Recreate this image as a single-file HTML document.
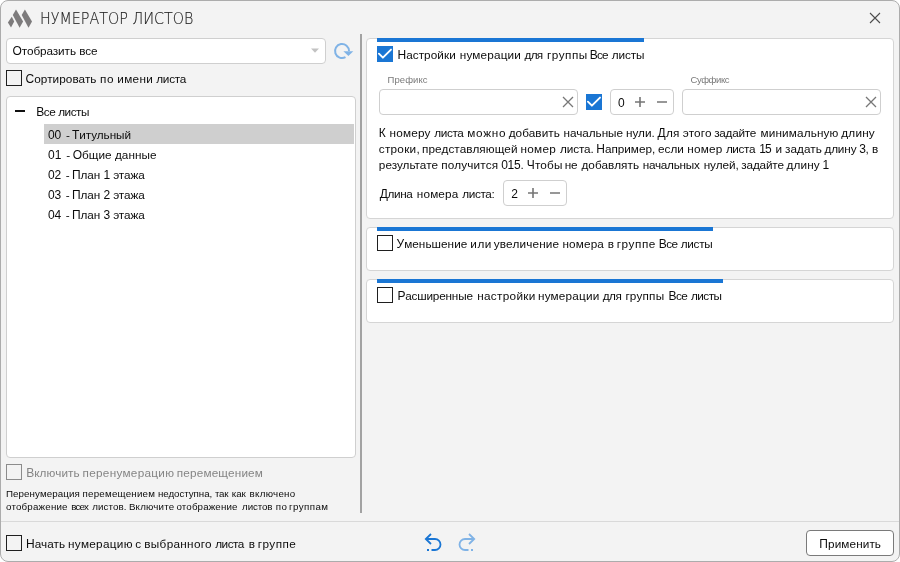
<!DOCTYPE html>
<html lang="ru">
<head>
<meta charset="utf-8">
<title>Нумератор листов</title>
<style>
html,body{margin:0;padding:0;background:#fff;}
body{width:900px;height:562px;position:relative;overflow:hidden;font-family:"Liberation Sans",sans-serif;}
.win{position:absolute;left:0;top:0;width:900px;height:562px;box-sizing:border-box;background:#f3f3f3;border:1px solid #acacac;border-radius:8px;}
.abs{position:absolute;box-sizing:border-box;}
.t{position:absolute;white-space:nowrap;line-height:16px;height:16px;}
.t .c{font-size:12px;}
.t .w{position:relative;}
.box{position:absolute;box-sizing:border-box;background:#fff;border:1px solid #cfcfcf;border-radius:4px;}
.panel{position:absolute;box-sizing:border-box;background:#fff;border:1px solid #d5d5d5;border-radius:4px;}
.bar{position:absolute;height:4px;background:#1a76d4;}
.cb{position:absolute;box-sizing:border-box;width:16px;height:16px;border:1px solid #1f1f1f;background:transparent;}
.cb.dis{border-color:#8c8c8c;}
.cb.on{border:none;background:#1a76d4;}
svg{position:absolute;overflow:visible;}
</style>
</head>
<body>
<div id="root" style="position:absolute;left:0;top:0;width:900px;height:562px;will-change:transform;">
<div class="win"></div>

<!-- logo -->
<svg style="left:0;top:0" width="40" height="36" viewBox="0 0 40 36">
  <g fill="#7d7b7c">
    <polygon points="7.9,22.4 11.8,16.7 14.2,21.4 11.0,27.5"/>
    <polygon points="12.8,15.0 16.0,9.6 23.1,21.4 19.6,27.8"/>
    <polygon points="21.7,15.0 24.9,9.6 32.0,21.4 28.5,27.8"/>
  </g>
</svg>

<!-- close -->
<svg style="left:865px;top:8px" width="20" height="20" viewBox="0 0 20 20">
  <path d="M5 5 L15 15 M15 5 L5 15" stroke="#4c4c4c" stroke-width="1.1" fill="none"/>
</svg>

<!-- combo -->
<div class="box" style="left:6px;top:38px;width:320px;height:26px;"></div>
<svg style="left:311px;top:48px" width="8" height="5" viewBox="0 0 8 5"><polygon points="0,0.5 8,0.5 4,4.8" fill="#c2c2c2"/></svg>

<!-- refresh icon -->
<svg style="left:332px;top:42px" width="22" height="18" viewBox="0 0 22 18">
  <path d="M17 9.1 A7 7 0 1 0 13.5 15.06" stroke="#80b3e6" stroke-width="2" fill="none"/>
  <polygon points="11.4,9.2 21.3,9.2 16.4,13.9" fill="#80b3e6"/>
</svg>

<!-- sort checkbox -->
<div class="cb" style="left:6px;top:70px;"></div>

<!-- tree -->
<div class="box" style="left:6px;top:96px;width:350px;height:362px;"></div>
<div class="abs" style="left:15px;top:110px;width:10px;height:2px;background:#111;"></div>
<div class="abs" style="left:44px;top:124px;width:310px;height:20px;background:#cfcfcf;"></div>

<!-- disabled checkbox -->
<div class="cb dis" style="left:6px;top:464px;"></div>

<!-- vertical separator -->
<div class="abs" style="left:360px;top:34px;width:2px;height:479px;background:#a2a2a2;"></div>

<!-- bottom line -->
<div class="abs" style="left:1px;top:521px;width:898px;height:1px;background:#d9d9d9;"></div>
<div class="cb" style="left:6px;top:535px;"></div>

<!-- undo / redo -->
<svg style="left:420px;top:528px" width="60" height="28" viewBox="0 0 60 28">
  <g fill="none" stroke="#1a76d4" stroke-width="1.8">
    <path d="M11 6 L5.8 11 L11 16"/>
    <path d="M6 11 H15 A5.5 5.5 0 0 1 15 22 H11.5"/>
    <path d="M7 22 H9"/>
  </g>
  <g fill="none" stroke="#80b3e6" stroke-width="1.8">
    <path d="M49 6 L54.2 11 L49 16"/>
    <path d="M54 11 H45 A5.5 5.5 0 0 0 45 22 H48.5"/>
    <path d="M51 22 H53"/>
  </g>
</svg>

<!-- apply -->
<div class="abs" style="left:806px;top:530px;width:88px;height:26px;background:#fff;border:1px solid #7a7a7a;border-radius:4px;"></div>

<!-- panel 1 -->
<div class="panel" style="left:366px;top:38px;width:528px;height:181px;"></div>
<div class="bar" style="left:377px;top:38px;width:267px;"></div>
<div class="cb on" style="left:377px;top:46px;"></div>
<svg style="left:377px;top:46px" width="16" height="16" viewBox="0 0 16 16"><path d="M1.9 7.7 L5.9 11.7 L14 3.6" stroke="#fff" stroke-width="1.9" stroke-linecap="round" stroke-linejoin="round" fill="none"/></svg>

<div class="box" style="left:379px;top:89px;width:199px;height:26px;"></div>
<svg style="left:562px;top:96px" width="12" height="12" viewBox="0 0 12 12"><path d="M1 1 L11 11 M11 1 L1 11" stroke="#777" stroke-width="1.3" fill="none"/></svg>

<div class="cb on" style="left:586px;top:94px;"></div>
<svg style="left:586px;top:94px" width="16" height="16" viewBox="0 0 16 16"><path d="M1.9 7.7 L5.9 11.7 L14 3.6" stroke="#fff" stroke-width="1.9" stroke-linecap="round" stroke-linejoin="round" fill="none"/></svg>

<div class="box" style="left:610px;top:89px;width:64px;height:26px;"></div>
<svg style="left:635px;top:96px" width="36" height="12" viewBox="0 0 36 12"><path d="M0 6 H10 M5 1 V11 M22 6 H32" stroke="#757575" stroke-width="1.6" fill="none"/></svg>

<div class="box" style="left:682px;top:89px;width:199px;height:26px;"></div>
<svg style="left:865px;top:96px" width="12" height="12" viewBox="0 0 12 12"><path d="M1 1 L11 11 M11 1 L1 11" stroke="#777" stroke-width="1.3" fill="none"/></svg>

<div class="box" style="left:503px;top:180px;width:64px;height:26px;"></div>
<svg style="left:528px;top:187px" width="36" height="12" viewBox="0 0 36 12"><path d="M0 6 H10 M5 1 V11 M22 6 H32" stroke="#757575" stroke-width="1.6" fill="none"/></svg>

<!-- panel 2 -->
<div class="panel" style="left:366px;top:227px;width:528px;height:44px;"></div>
<div class="bar" style="left:377px;top:227px;width:336px;"></div>
<div class="cb" style="left:377px;top:235px;"></div>

<!-- panel 3 -->
<div class="panel" style="left:366px;top:279px;width:528px;height:44px;"></div>
<div class="bar" style="left:377px;top:279px;width:346px;"></div>
<div class="cb" style="left:377px;top:287px;"></div>

<div class="t" id="title" style="left:39.75px;top:10.81px;font-size:15px;color:#222;transform-origin:0 13.19px;-webkit-text-stroke:0.15px #222;font-family:'DejaVu Sans Light','DejaVu Sans','Liberation Sans',sans-serif;font-weight:200;transform:scale(0.9531,1);">НУМЕРАТОР ЛИСТОВ</div>
<div class="t" id="combo" style="left:12.50px;top:42.93px;font-size:11.75px;color:#0c0c0c;letter-spacing:-0.081px;"><span class="c">О</span>тобразить все</div>
<div class="t" id="sort" style="left:26.25px;top:70.93px;font-size:11.75px;color:#0c0c0c;"><span class="w" style="left:-0.70px;letter-spacing:0.050px;"><span class="c">С</span>ортировать</span> <span class="w" style="left:-0.50px;letter-spacing:0.800px;">по</span> <span class="w" style="left:-1.00px;letter-spacing:0.350px;">имени</span> <span class="w" style="left:-1.20px;letter-spacing:-0.275px;">листа</span></div>
<div class="t" id="t0" style="left:36.25px;top:104.43px;font-size:11.75px;color:#0c0c0c;letter-spacing:-0.445px;"><span class="c">В</span>се листы</div>
<div class="t" id="t1" style="left:48.00px;top:127.43px;font-size:11.75px;color:#0c0c0c;letter-spacing:-0.064px;"><span class="c">00</span> <span class="w" style="left:1.6px">-</span> <span class="w" style="left:0.5px"><span class="c">Т</span>итульный</span></div>
<div class="t" id="t2" style="left:48.00px;top:147.43px;font-size:11.75px;color:#0c0c0c;letter-spacing:0.029px;"><span class="c">01</span> <span class="w" style="left:1.6px">-</span> <span class="w" style="left:0.7px"><span class="c">О</span>бщие</span> <span class="w" style="left:0.7px">данные</span></div>
<div class="t" id="t3" style="left:48.00px;top:167.43px;font-size:11.75px;color:#0c0c0c;letter-spacing:-0.061px;"><span class="c">02</span> <span class="w" style="left:1.4px">-</span> <span class="w" style="left:0.4px"><span class="c">П</span>лан</span> <span class="w" style="left:0.4px"><span class="c">1</span></span> <span class="w" style="left:0.3px">этажа</span></div>
<div class="t" id="t4" style="left:48.00px;top:187.43px;font-size:11.75px;color:#0c0c0c;letter-spacing:-0.061px;"><span class="c">03</span> <span class="w" style="left:1.4px">-</span> <span class="w" style="left:0.4px"><span class="c">П</span>лан</span> <span class="w" style="left:0.4px"><span class="c">2</span></span> <span class="w" style="left:0.3px">этажа</span></div>
<div class="t" id="t5" style="left:48.00px;top:207.43px;font-size:11.75px;color:#0c0c0c;letter-spacing:-0.061px;"><span class="c">04</span> <span class="w" style="left:1.4px">-</span> <span class="w" style="left:0.4px"><span class="c">П</span>лан</span> <span class="w" style="left:0.4px"><span class="c">3</span></span> <span class="w" style="left:0.3px">этажа</span></div>
<div class="t" id="en" style="left:26.75px;top:464.93px;font-size:11.75px;color:#858585;"><span class="w" style="left:-0.60px;letter-spacing:0.086px;"><span class="c">В</span>ключить</span> <span class="w" style="left:-1.00px;letter-spacing:0.283px;">перенумерацию</span> <span class="w" style="left:-1.70px;letter-spacing:0.155px;">перемещением</span></div>
<div class="t" id="s1" style="left:6.50px;top:485.62px;font-size:9.75px;color:#0c0c0c;"><span class="w" style="left:-0.50px;letter-spacing:0.083px;">Перенумерация</span> <span class="w" style="left:-0.50px;letter-spacing:0.227px;">перемещением</span> <span class="w" style="left:-0.50px;letter-spacing:-0.050px;">недоступна,</span> <span class="w" style="left:-0.50px;letter-spacing:-0.250px;">так</span> <span class="w" style="left:0.30px;letter-spacing:-0.100px;">как</span> <span class="w" style="left:1.50px;letter-spacing:0.286px;">включено</span></div>
<div class="t" id="s2" style="left:6.50px;top:498.62px;font-size:9.75px;color:#0c0c0c;"><span class="w" style="left:-0.50px;letter-spacing:0.190px;">отображение</span> <span class="w" style="left:0.20px;letter-spacing:-0.733px;">всех</span> <span class="w" style="left:1.50px;letter-spacing:0.083px;">листов.</span> <span class="w" style="left:1.20px;letter-spacing:0.171px;">Включите</span> <span class="w" style="left:0.70px;letter-spacing:0.130px;">отображение</span> <span class="w" style="left:2.50px;letter-spacing:-0.100px;">листов</span> <span class="w" style="left:3.00px;letter-spacing:0.500px;">по</span> <span class="w" style="left:2.00px;letter-spacing:0.417px;">группам</span></div>
<div class="t" id="start" style="left:26.75px;top:536.18px;font-size:11.75px;color:#0c0c0c;"><span class="w" style="left:-0.80px;letter-spacing:0.040px;"><span class="c">Н</span>ачать</span> <span class="w" style="left:-1.10px;letter-spacing:0.312px;">нумерацию</span> <span class="w" style="left:-2.00px;">с</span> <span class="w" style="left:-2.10px;letter-spacing:0.311px;">выбранного</span> <span class="w" style="left:-2.00px;letter-spacing:-0.550px;">листа</span> <span class="w" style="left:-0.10px;">в</span> <span class="w" style="left:-0.60px;letter-spacing:0.420px;">группе</span></div>
<div class="t" id="h1" style="left:397.50px;top:47.43px;font-size:11.75px;color:#0c0c0c;"><span class="w" style="left:-0.10px;letter-spacing:0.062px;"><span class="c">Н</span>астройки</span> <span class="w" style="left:0.70px;letter-spacing:0.150px;">нумерации</span> <span class="w" style="left:1.10px;letter-spacing:-0.800px;">для</span> <span class="w" style="left:2.50px;letter-spacing:0.500px;">группы</span> <span class="w" style="left:1.20px;letter-spacing:-0.800px;"><span class="c">В</span>се</span> <span class="w" style="left:2.10px;letter-spacing:-0.125px;">листы</span></div>
<div class="t" id="pre" style="left:387.50px;top:71.71px;font-size:9.5px;color:#7a7a7a;letter-spacing:0.078px;">Префикс</div>
<div class="t" id="suf" style="left:690.50px;top:71.71px;font-size:9.5px;color:#7a7a7a;letter-spacing:-0.411px;">Суффикс</div>
<div class="t" id="n0" style="left:618.00px;top:95.43px;font-size:11.75px;color:#0c0c0c;"><span class="c">0</span></div>
<div class="t" id="p1" style="left:379.25px;top:124.93px;font-size:11.75px;color:#0c0c0c;"><span class="w" style="left:-0.40px;"><span class="c">К</span></span> <span class="w" style="letter-spacing:0.200px;">номеру</span> <span class="w" style="left:0.40px;letter-spacing:-0.400px;">листа</span> <span class="w" style="left:1.00px;letter-spacing:0.750px;">можно</span> <span class="w" style="letter-spacing:0.071px;">добавить</span> <span class="w" style="left:0.30px;letter-spacing:-0.037px;">начальные</span> нули. <span class="w" style="left:-0.50px;letter-spacing:0.250px;"><span class="c">Д</span>ля</span> <span class="w" style="left:-0.70px;letter-spacing:0.175px;">этого</span> <span class="w" style="left:-1.50px;letter-spacing:-0.250px;">задайте</span> <span class="w" style="left:-0.30px;letter-spacing:0.130px;">минимальную</span> <span class="w" style="left:-0.70px;letter-spacing:0.175px;">длину</span></div>
<div class="t" id="p2" style="left:379.25px;top:141.18px;font-size:11.75px;color:#0c0c0c;"><span class="w" style="left:-0.50px;letter-spacing:0.267px;">строки,</span> <span class="w" style="left:-1.70px;letter-spacing:0.092px;">представляющей</span> <span class="w" style="left:-2.00px;letter-spacing:0.250px;">номер</span> <span class="w" style="left:-1.20px;letter-spacing:-0.140px;">листа.</span> <span class="w" style="left:-1.70px;letter-spacing:-0.037px;"><span class="c">Н</span>апример,</span> <span class="w" style="left:-2.00px;">если</span> <span class="w" style="left:-2.00px;letter-spacing:0.250px;">номер</span> <span class="w" style="left:-2.00px;letter-spacing:-0.375px;">листа</span> <span class="w" style="left:-1.20px;letter-spacing:-0.800px;"><span class="c">15</span></span> <span class="w" style="left:0.20px;">и</span> <span class="w" style="left:-0.20px;letter-spacing:0.060px;">задать</span> <span class="w" style="left:-1.00px;letter-spacing:-0.125px;">длину</span> <span class="w" style="left:-1.50px;letter-spacing:-0.500px;"><span class="c">3</span>,</span> <span class="w" style="left:-1.00px;">в</span></div>
<div class="t" id="p3" style="left:379.25px;top:157.43px;font-size:11.75px;color:#0c0c0c;"><span class="w" style="left:-0.40px;">результате</span> <span class="w" style="left:-0.30px;letter-spacing:0.163px;">получится</span> <span class="w" style="left:-0.70px;letter-spacing:-0.233px;"><span class="c">015</span>.</span> <span class="w" style="left:-0.80px;letter-spacing:0.175px;"><span class="c">Ч</span>тобы</span> <span class="w" style="left:-2.00px;">не</span> <span class="w" style="left:-1.50px;letter-spacing:0.075px;">добавлять</span> <span class="w" style="left:-1.20px;letter-spacing:-0.275px;">начальных</span> <span class="w" style="left:-0.30px;letter-spacing:-0.040px;">нулей,</span> <span class="w" style="left:-1.00px;letter-spacing:-0.167px;">задайте</span> <span class="w" style="left:-1.50px;letter-spacing:0.125px;">длину</span> <span class="w" style="left:-2.00px;"><span class="c">1</span></span></div>
<div class="t" id="len" style="left:379.25px;top:185.93px;font-size:11.75px;color:#0c0c0c;"><span class="w" style="left:0.40px;letter-spacing:-0.350px;"><span class="c">Д</span>лина</span> <span class="w" style="left:1.50px;letter-spacing:0.140px;">номера</span> <span class="w" style="left:2.10px;letter-spacing:-0.360px;">листа:</span></div>
<div class="t" id="n2" style="left:511.25px;top:186.18px;font-size:11.75px;color:#0c0c0c;"><span class="c">2</span></div>
<div class="t" id="h2" style="left:397.50px;top:236.18px;font-size:11.75px;color:#0c0c0c;"><span class="w" style="left:-1.00px;letter-spacing:0.044px;"><span class="c">У</span>меньшение</span> <span class="w" style="left:-1.30px;letter-spacing:0.550px;">или</span> <span class="w" style="left:-2.80px;letter-spacing:0.178px;">увеличение</span> <span class="w" style="left:-2.90px;letter-spacing:0.140px;">номера</span> <span class="w" style="left:-2.40px;">в</span> <span class="w" style="left:-2.90px;letter-spacing:0.540px;">группе</span> <span class="w" style="left:-3.20px;letter-spacing:-0.600px;"><span class="c">В</span>се</span> <span class="w" style="left:-3.20px;letter-spacing:-0.300px;">листы</span></div>
<div class="t" id="h3" style="left:397.50px;top:288.18px;font-size:11.75px;color:#0c0c0c;"><span class="w" style="left:-0.10px;letter-spacing:-0.190px;"><span class="c">Р</span>асширенные</span> <span class="w" style="left:1.00px;letter-spacing:0.325px;">настройки</span> <span class="w" style="letter-spacing:0.200px;">нумерации</span> <span class="w" style="left:-0.10px;letter-spacing:-0.450px;">для</span> <span class="w" style="left:0.60px;letter-spacing:0.200px;">группы</span> <span class="w" style="left:1.50px;letter-spacing:-0.550px;"><span class="c">В</span>се</span> <span class="w" style="left:1.90px;letter-spacing:-0.525px;">листы</span></div>
<div class="t" id="apply" style="left:819.30px;top:536.18px;font-size:11.75px;color:#0c0c0c;letter-spacing:0.099px;"><span class="c">П</span>рименить</div>
</div>
</body>
</html>
